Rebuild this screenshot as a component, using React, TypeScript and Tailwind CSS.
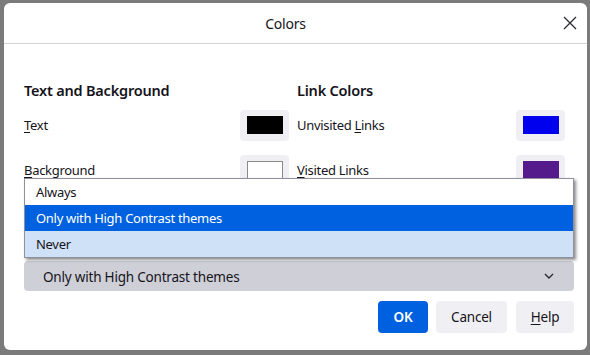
import React from "react";

const font = { fontFamily: '"Noto Sans", "Segoe UI", sans-serif' };

const Swatch = ({ color, bordered }: { color: string; bordered?: boolean }) => (
  <button className="w-[49px] h-[31px] rounded-[4px] bg-[#f0f0f4] flex items-center justify-center">
    <span
      className={`block w-[36px] h-[18px] ${bordered ? "border border-[#8a8a8a]" : ""}`}
      style={{ backgroundColor: color }}
    />
  </button>
);

export default function App() {
  return (
    <div className="w-[590px] h-[355px] bg-[#7b7b7b] pt-[3px] pl-[4px] overflow-hidden text-[#15141a]" style={font}>
      <div className="relative w-[583px] h-[347px] bg-white rounded-[6px]">
        {/* header */}
        <div className="relative h-[41px] flex items-center justify-center pr-[20px] border-b border-[#d4d4d8]">
          <span className="text-[14px] tracking-[-0.2px]">Colors</span>
          <svg className="absolute right-[10px] top-[13px]" width="14" height="14" viewBox="0 0 14 14">
            <path d="M1 1 L13 13 M13 1 L1 13" stroke="#2b2a33" strokeWidth="1.3" />
          </svg>
        </div>

        <div className="px-[20px] pt-[36px]">
          <div className="flex">
            {/* left column */}
            <div className="w-[265px] mr-[8px]">
              <h2 className="text-[14.5px] tracking-[-0.2px] font-semibold leading-[20px]">Text and Background</h2>
              <div className="mt-[9px] h-[32px] flex items-center justify-between text-[13px] tracking-[-0.3px]">
                <span className="pt-[2px]"><u className="underline-offset-2">T</u>ext</span>
                <Swatch color="#000000" />
              </div>
              <div className="mt-[13px] h-[32px] flex items-center justify-between text-[13px] tracking-[-0.3px]">
                <span className="pt-[2px]"><u className="underline-offset-2">B</u>ackground</span>
                <Swatch color="#ffffff" bordered />
              </div>
            </div>
            {/* right column */}
            <div className="w-[268px]">
              <h2 className="text-[14.5px] tracking-[-0.2px] font-semibold leading-[20px]">Link Colors</h2>
              <div className="mt-[9px] h-[32px] flex items-center justify-between text-[13px] tracking-[-0.3px]">
                <span className="pt-[2px]">Unvisited <u className="underline-offset-2">L</u>inks</span>
                <Swatch color="#0000ee" />
              </div>
              <div className="mt-[13px] h-[32px] flex items-center justify-between text-[13px] tracking-[-0.3px]">
                <span className="pt-[2px]"><u className="underline-offset-2">V</u>isited Links</span>
                <Swatch color="#551a8b" />
              </div>
            </div>
          </div>

          {/* select */}
          <div className="mt-[75px] h-[30px] w-[550px] rounded-[4px] bg-[#cfcfd8] flex items-center justify-between pl-[19px] pr-[20px] text-[13.5px] tracking-[-0.2px]">
            <span className="pt-[2px]">Only with High Contrast themes</span>
            <svg width="10" height="6" viewBox="0 0 10 6">
              <path d="M1 1 L5 5 L9 1" fill="none" stroke="#2b2a33" strokeWidth="1.4" />
            </svg>
          </div>

          {/* buttons */}
          <div className="mt-[10px] w-[550px] flex justify-end gap-[8px] text-[13.5px] tracking-[-0.2px]">
            <button className="w-[50px] h-[32px] rounded-[4px] bg-[#0061e0] text-white font-semibold">OK</button>
            <button className="w-[71px] h-[32px] rounded-[4px] bg-[#f0f0f4]">Cancel</button>
            <button className="w-[58px] h-[32px] ml-[1px] rounded-[4px] bg-[#f0f0f4]">
              <u className="underline-offset-2">H</u>elp
            </button>
          </div>
        </div>

        {/* open dropdown popup */}
        <div className="absolute left-[20px] top-[175px] w-[550px] border border-[#8f8f9d] bg-white shadow-[2px_2px_3px_rgba(0,0,0,0.45)] text-[13px] tracking-[-0.3px]">
          <div className="h-[26px] flex items-center pl-[11px] pt-[2px]">Always</div>
          <div className="h-[26px] flex items-center pl-[11px] pt-[2px] bg-[#0061e0] text-white">Only with High Contrast themes</div>
          <div className="h-[26px] flex items-center pl-[11px] pt-[2px] bg-[#cfe1f7]">Never</div>
        </div>
      </div>
    </div>
  );
}
